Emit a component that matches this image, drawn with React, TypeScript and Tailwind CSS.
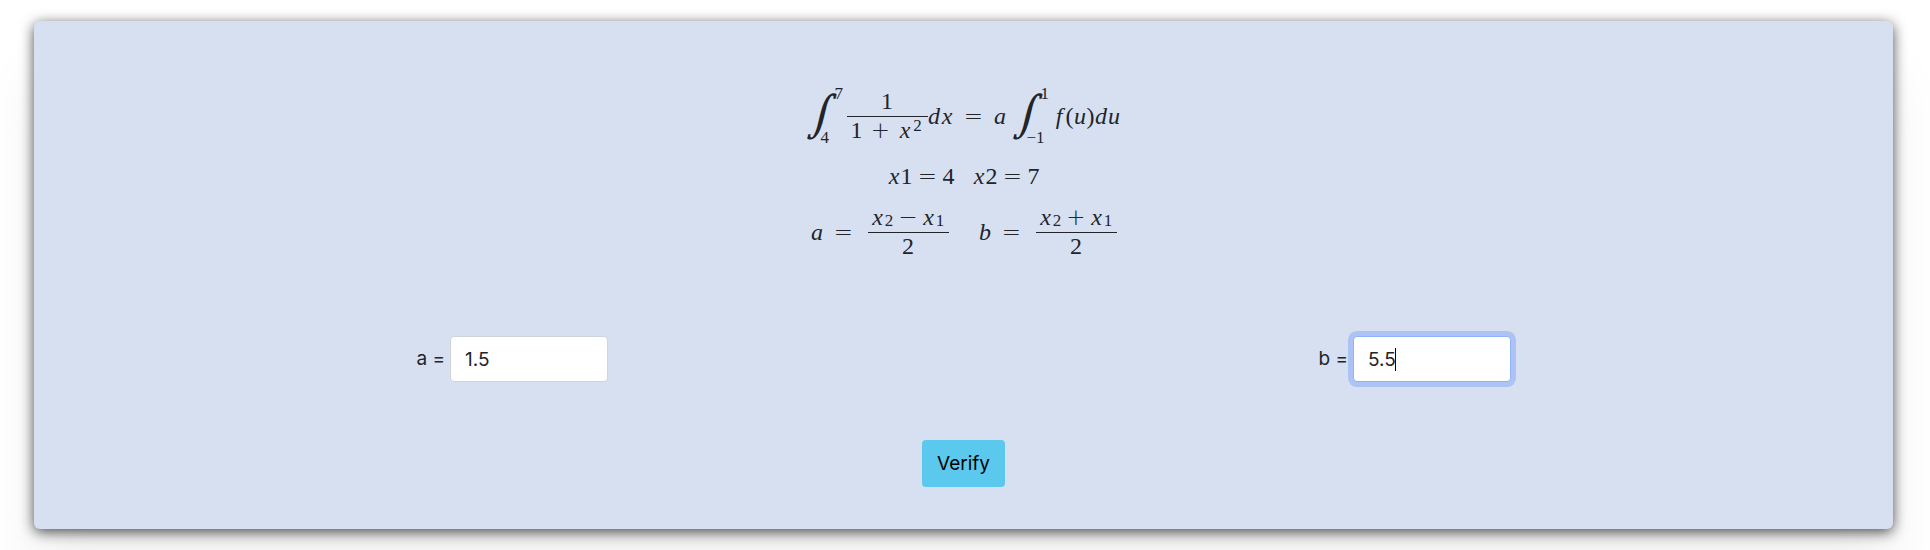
import { useState, type ReactNode } from "react";

const cell = "inline-block text-center";

function Var({ children }: { children: ReactNode }) {
  return <i className={`${cell} w-[13px]`}>{children}</i>;
}

function Num({ children }: { children: ReactNode }) {
  return <span className={`${cell} w-3`}>{children}</span>;
}

function Paren({ children }: { children: ReactNode }) {
  return <span className={`${cell} w-2`}>{children}</span>;
}

function Op({ children }: { children: ReactNode }) {
  return (
    <span className={`${cell} w-5 font-['DejaVu_Sans_Light','DejaVu_Sans',sans-serif] text-[23px] font-extralight`}>
      {children}
    </span>
  );
}

function Sub({ children }: { children: ReactNode }) {
  return <span className={`${cell} w-[10px] pt-2 text-[17px] leading-4`}>{children}</span>;
}

function Fraction({ top, bottom }: { top: ReactNode; bottom: ReactNode }) {
  return (
    <span className="inline-flex w-[81px] flex-col items-center">
      <span className="flex h-7 items-center pb-0.5">{top}</span>
      <span className="h-px w-full bg-[#212529]" />
      <span className="flex h-7 items-center pb-0.5">{bottom}</span>
    </span>
  );
}

function Integral({ from, to }: { from: string; to: string }) {
  return (
    <span className="inline-flex items-center">
      <i className="inline-block w-[18px] text-center font-['DejaVu_Math_TeX_Gyre','DejaVu_Serif',serif] text-[42px] leading-[48px]">
        ∫
      </i>
      <span className="-ml-1 flex h-[60px] w-[26px] flex-col justify-between text-[17px] leading-4">
        <span className="pl-[14px]">{to}</span>
        <span>{from}</span>
      </span>
    </span>
  );
}

export default function App() {
  const [a, setA] = useState("1.5");
  const [b, setB] = useState("5.5");
  const field =
    "h-[46px] w-[158px] rounded border bg-white px-3.5 text-[19px] text-[#212529] outline-none";

  return (
    <main className="mr-[3px] bg-white px-[34px] pt-[21px] pb-[21px] font-['Inter',sans-serif] text-[19px] text-[#212529]">
      <section className="rounded-md bg-[#d7e0f1] pt-[60px] pb-[42px] shadow-[0_3px_14px_rgba(0,0,0,0.7),0_50px_60px_rgba(0,0,0,0.06)]">
        <div className="flex flex-col items-center font-['Liberation_Serif',serif] text-[24px] leading-[22px]">
          <div className="flex h-[70px] items-center">
            <Integral from="4" to="7" />
            <Fraction
              top={<Num>1</Num>}
              bottom={
                <span className="flex items-center">
                  <Num>1</Num>
                  <span className="flex px-2">
                    <Op>+</Op>
                  </span>
                  <Var>x</Var>
                  <span className="w-[12px] pb-2 text-center text-[17px] leading-4">2</span>
                </span>
              }
            />
            <span className="flex">
              <Var>d</Var>
              <Var>x</Var>
            </span>
            <span className="flex px-2.5">
              <Op>=</Op>
            </span>
            <Var>a</Var>
            <span className="flex pl-1.5">
              <Integral from="−1" to="1" />
            </span>
            <span className="flex">
              <Var>f</Var>
              <Paren>(</Paren>
              <Var>u</Var>
              <Paren>)</Paren>
              <Var>d</Var>
              <Var>u</Var>
            </span>
          </div>

          <div className="mt-[10px] flex h-[30px] items-center gap-[18px]">
            {[
              ["1", "4"],
              ["2", "7"],
            ].map(([index, value]) => (
              <span key={index} className="flex items-center">
                <Var>x</Var>
                <Num>{index}</Num>
                <span className="flex px-[5px]">
                  <Op>=</Op>
                </span>
                <Num>{value}</Num>
              </span>
            ))}
          </div>

          <div className="mt-[6px] flex h-[70px] items-center gap-[30px]">
            {[
              ["a", "−"],
              ["b", "+"],
            ].map(([name, sign]) => (
              <span key={name} className="flex items-center">
                <Var>{name}</Var>
                <span className="flex pr-3.5 pl-2.5">
                  <Op>=</Op>
                </span>
                <Fraction
                  top={
                    <span className="flex items-center">
                      <Var>x</Var>
                      <Sub>2</Sub>
                      <span className="flex px-1">
                        <Op>{sign}</Op>
                      </span>
                      <Var>x</Var>
                      <Sub>1</Sub>
                    </span>
                  }
                  bottom={<Num>2</Num>}
                />
              </span>
            ))}
          </div>
        </div>

        <div className="mt-[69px] grid grid-cols-2 px-[27px]">
          <div className="flex items-center justify-center gap-[5px]">
            <label htmlFor="a">a =</label>
            <input
              id="a"
              value={a}
              onChange={(e) => setA(e.target.value)}
              className={`${field} border-[#ced4da]`}
            />
          </div>
          <div className="flex items-center justify-center gap-[5px]">
            <label htmlFor="b">b =</label>
            <div className="relative">
              <input
                id="b"
                value={b}
                onChange={(e) => setB(e.target.value)}
                className={`${field} border-[#8fb4fa] ring-5 ring-[#adc3f3]`}
              />
              <span className="absolute top-3 left-[42px] h-[23px] w-px bg-black" />
            </div>
          </div>
        </div>

        <div className="mt-[58px] flex justify-center">
          <button type="button" className="h-[47px] rounded bg-[#5bc8ed] px-[15px] pt-0.5 text-[19px] text-black">
            Verify
          </button>
        </div>
      </section>
    </main>
  );
}
